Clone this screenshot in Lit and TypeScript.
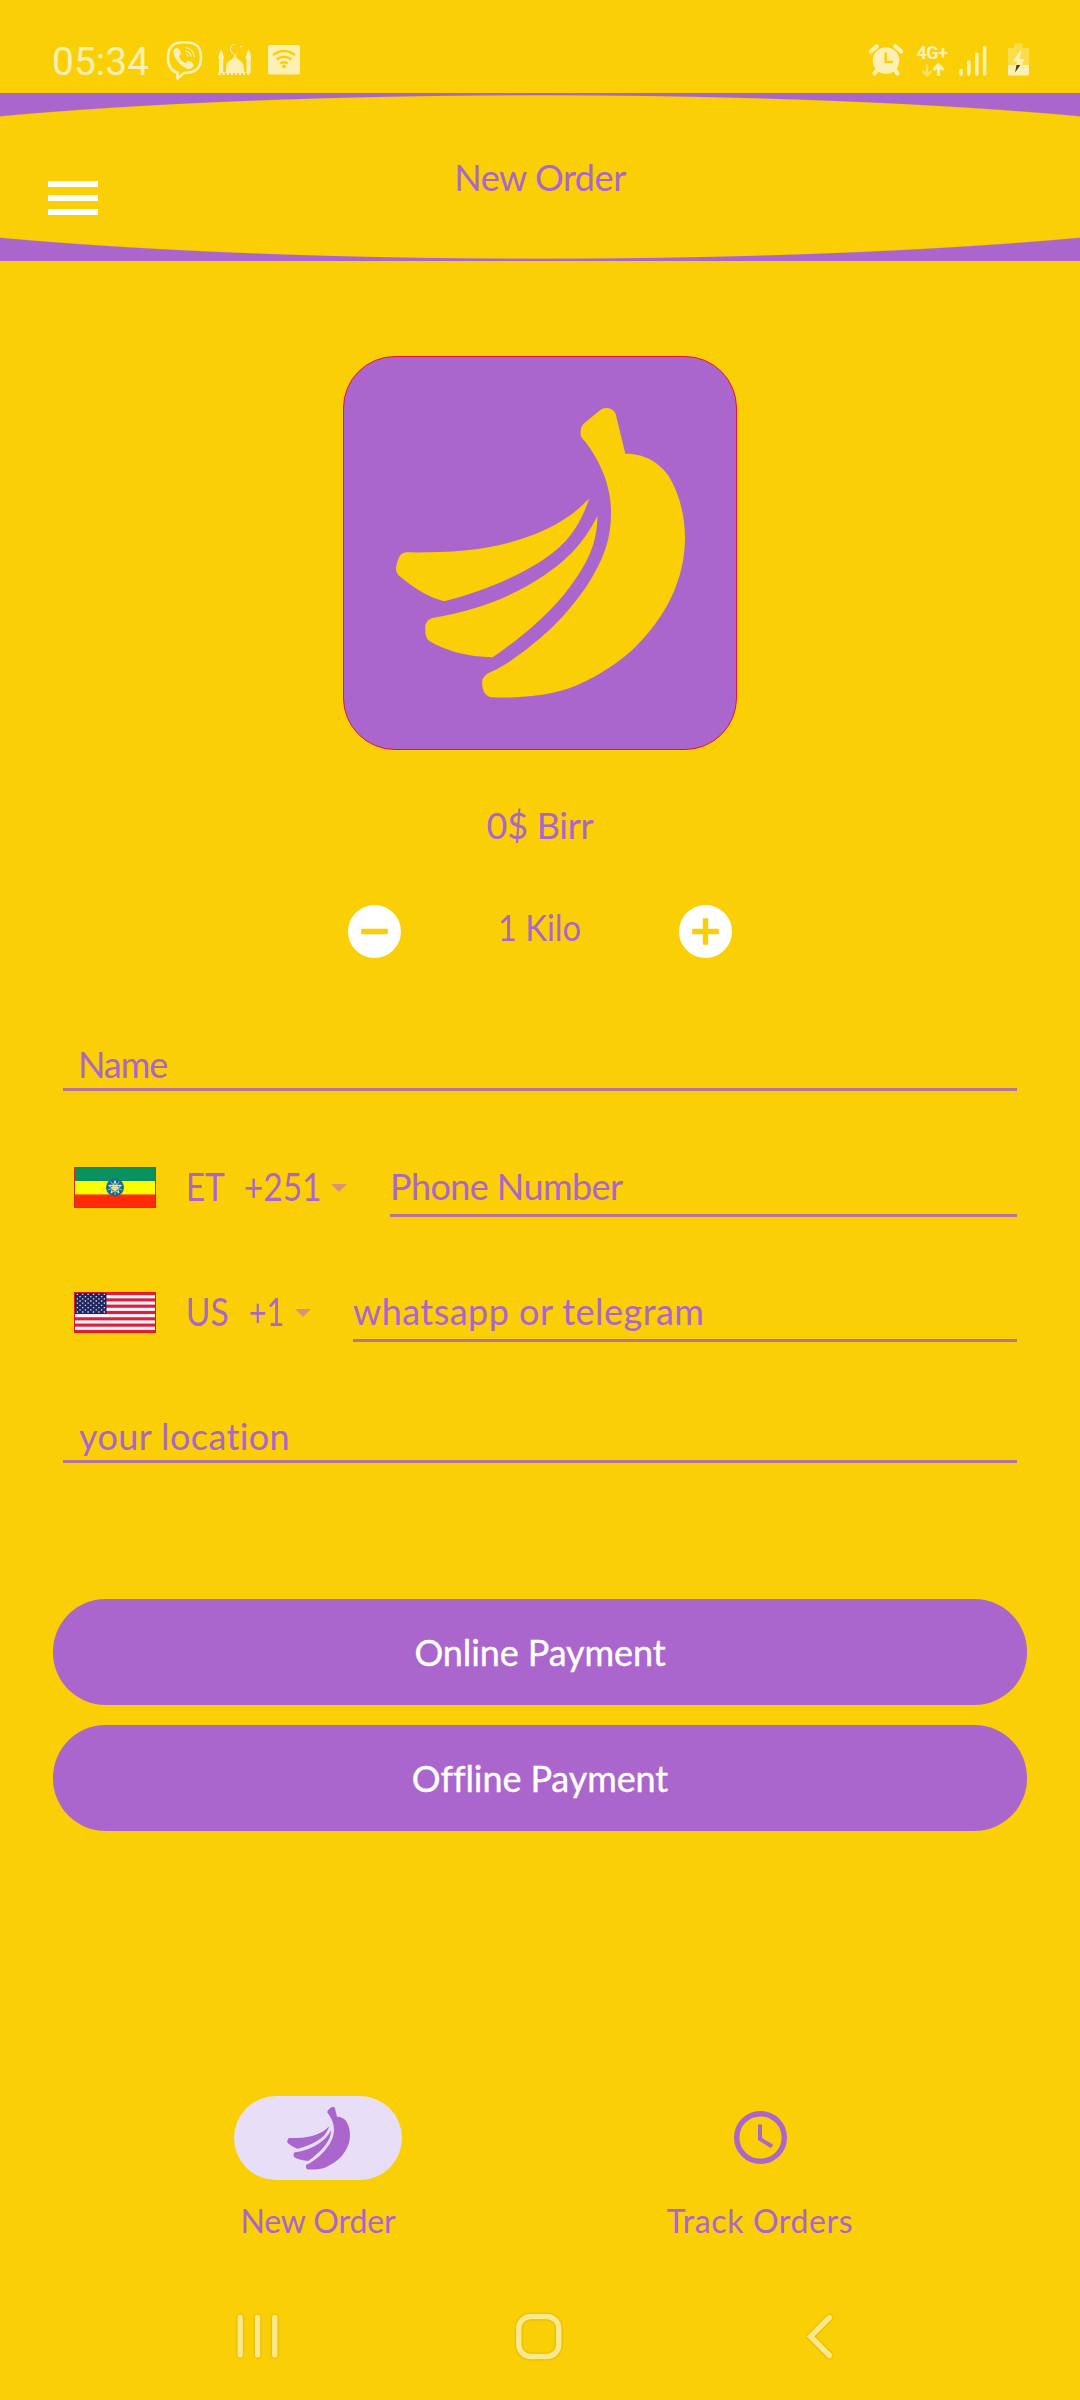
import { LitElement, html, svg, css } from "lit";
import { customElement } from "lit/decorators.js";

const bananas = svg`
  <path d="M758 238L806 198Q815 189 828 188Q849 190 856 207L885 326C920 325 975 337 1012 389C1045 438 1064 510 1064 578C1064 700 1010 815 905 916C850 966 780 1005 725 1027C660 1052 570 1060 482 1057Q463 1053 457 1030Q454 1013 457 1001Q462 990 475 984Q500 974 530 955C640 880 710 812 775 714C835 618 842 560 842 495C840 410 805 350 780 311Q768 293 753 277Q746 254 758 238Z"/>
  <path d="M777 460C710 533 620 570 540 592C440 619 340 623 228 622Q212 623 206 637Q199 652 197 668Q196 682 208 694C250 729 295 758 342 769C440 745 540 705 625 653C710 600 748 545 777 460Z"/>
  <path d="M801 513C760 595 710 645 640 692C540 758 440 796 306 819Q290 823 285 840Q284 855 286 869Q289 882 297 888C350 919 410 935 487 937C560 887 640 822 700 750C765 668 802 600 801 513Z"/>`;

const petals = [0, 1, 2, 3, 4];
const emblem = svg`
  <circle cx="41" cy="20.5" r="9" fill="#1766a8"/>
  ${petals.map((i) => svg`<g transform="rotate(${i * 72} 41 20.5)">
    <path d="M41 13.6L38.6 21.3M41 13.6L43.4 21.3M41 18V22" stroke="#e9e77a" stroke-width="1" fill="none"/>
    <path d="M41 24V28" stroke="#cfdc8a" stroke-width=".7"/></g>`)}`;

const stripes = [0, 2, 4, 6, 8, 10, 12];
const starRows = [0, 1, 2, 3, 4, 5, 6, 7, 8];

@customElement("app-root")
export class AppRoot extends LitElement {
  static styles = css`
    :host {
      display: flex;
      flex-direction: column;
      box-sizing: border-box;
      width: 1080px;
      height: 2400px;
      overflow: hidden;
      background: #facf05;
      color: #aa66cc;
      font: 36px/42px Lato, "Liberation Sans", sans-serif;
    }
    svg { display: block; flex: none; }
    .status {
      display: flex;
      height: 93px;
      box-sizing: border-box;
      padding: 38px 50px 0 52px;
      color: #fdf0b4;
      font-family: Roboto, sans-serif;
      font-size: 39px;
      line-height: 48px;
    }
    .status .time { width: 113px; }
    .status .left { margin-right: auto; }
    .header {
      display: flex;
      height: 168px;
      background: radial-gradient(ellipse 810px 82px at 540px 84px, #facf05 99%, #aa66cc 100.2%);
    }
    .menu {
      display: flex;
      flex-direction: column;
      gap: 8.5px;
      width: 50px;
      margin: 88px 0 0 48px;
    }
    .menu i { height: 5.5px; background: #fff; }
    .title {
      width: 884px;
      text-align: center;
      margin-top: 63px;
      letter-spacing: -0.45px;
    }
    .card {
      align-self: center;
      width: 394px;
      height: 394px;
      box-sizing: border-box;
      margin-top: 95px;
      border: 1px solid #ea1238;
      border-radius: 52px;
      background: #aa66cc;
      fill: #facf05;
      padding: 49px 51px;
    }
    .price { margin-top: 54px; text-align: center; letter-spacing: -0.27px; }
    .qty {
      display: flex;
      justify-content: space-between;
      align-self: center;
      width: 384px;
      margin-top: 59px;
    }
    .qty span { transform: scaleX(0.91); margin-top: 1px; }
    .field, .input {
      box-sizing: border-box;
      border-bottom: 3px solid #b5759b;
    }
    .field { height: 48px; margin: 0 63px; }
    .name { margin-top: 85px; padding-left: 15px; letter-spacing: -1.1px; }
    .location { margin-top: 73px; padding-left: 16px; letter-spacing: 0.4px; }
    .row { display: flex; height: 52px; padding: 0 63px 0 74px; }
    .et { margin-top: 74px; }
    .us { margin-top: 73px; }
    .row svg.flag { margin-top: 2px; }
    .code {
      font-size: 39px;
      line-height: 43px;
      transform-origin: left;
      transform: scaleX(0.86);
      white-space: nowrap;
    }
    .et .iso { width: 58px; margin-left: 30px; }
    .et .dial { width: 87px; }
    .us .iso { width: 63px; margin-left: 30px; }
    .us .dial { width: 46px; transform: scaleX(0.78); }
    .row svg.caret { margin-top: 19px; }
    .input { flex: 1; white-space: nowrap; }
    .et .input { margin-left: 43px; letter-spacing: -0.58px; }
    .us .input { margin-left: 42px; letter-spacing: 0.45px; }
    .buttons {
      display: flex;
      flex-direction: column;
      gap: 20px;
      margin: 136px 53px 0;
    }
    .button {
      height: 106px;
      box-sizing: border-box;
      padding-top: 32px;
      border-radius: 52.5px;
      background: #aa66cc;
      color: #fff;
      text-align: center;
      letter-spacing: -0.1px;
      -webkit-text-stroke: 0.4px #fff;
    }
    .nav {
      display: grid;
      grid-template-columns: 1fr 1fr;
      margin: 265px 99px 0 97px;
      font-size: 32px;
    }
    .tab { display: flex; flex-direction: column; align-items: center; gap: 20px; }
    .pill {
      display: flex;
      align-items: center;
      justify-content: center;
      width: 168px;
      height: 84px;
      box-sizing: border-box;
      padding-bottom: 1px;
      border-radius: 42px;
      fill: #aa66cc;
    }
    .active { background: #e8def8; }
    .first { letter-spacing: -0.1px; }
    .second { letter-spacing: 0.63px; }
    .system { display: flex; margin: 70px 0 0 233px; }
    .recents { margin-right: 231px; }
    .home { margin-right: 238px; }
    .glow { filter: drop-shadow(0 0 1px rgba(150, 120, 0, 0.55)); }
  `;

  private renderStatus() {
    return html`<div class="status">
      <span class="time">05:34</span>
      <svg class="left" width="140" height="44" viewBox="165 38 140 44" fill="currentColor">
        <path d="M178.500 73.500C170.500 71.500 168 66 168 58.500C168 47.500 172.500 42.700 184.500 42.700C196.500 42.700 201 47.500 201 58C201 68.500 196 73.500 184 73.500L177.500 79V73.300" transform="translate(0 -.5)" fill="none" stroke="currentColor" stroke-width="2.6" stroke-linejoin="round"/>
        <path d="M176.500 49C179.500 48 182 52.500 181.500 54.500C181 56 179.500 56 180 57.500C181 60.500 183 62.500 185.500 63.500C187 64 187.500 61.500 189 61.500C191 61.500 195 64.500 194.500 66C193.500 69 190.500 70.500 188 69.500C181 66.500 177.500 62.500 174.700 55.500C173.500 52.500 174 50 176.500 49Z" transform="translate(-.7 -.8)"/>
        <path d="M185 47.500Q193.500 48.500 194.500 57M185.200 51Q190.500 51.500 191.200 56.500M185.500 54.200Q187.700 54.200 188.200 56.500" fill="none" stroke="currentColor" stroke-width="1.2"/>
        <path d="M238 45A5 5 0 1 0 239.600 51A4.600 4.600 0 1 1 238 45ZM240 46.500l1-1.500 1 1.500-1 1.500zM234 53.500h2L235.800 56Q237 59 240.500 61Q245 64.500 243 68.500H226.500Q225 64.500 229 61Q233.500 59 234.200 56ZM221 49L223.200 54V70H219V54ZM248.500 49L250.700 54V70H246.500V54ZM218.500 56h5.200v3h-5.200zM245.800 56h5.200v3h-5.200zM226 68H244V73H226ZM219 70H223.200V73H219ZM246.500 70H250.700V73H246.500Z"/>
        <path d="M218.500 73.500H251" stroke="currentColor" stroke-width="3" stroke-dasharray="2.200 1.900"/>
        <rect x="268" y="45" width="32" height="29.500" rx="2"/>
        <path d="M273 55Q284 47 295 55M276.800 59.500Q284 54 291.200 59.500M280.300 63.500Q284 61 287.700 63.500" fill="none" stroke="#facf05" stroke-width="2.300"/>
        <circle cx="284" cy="66.300" r="1.900" fill="#facf05"/>
      </svg>
      <svg width="165" height="44" viewBox="865 38 165 44" fill="currentColor">
        <circle cx="886" cy="60.500" r="13.300"/>
        <path d="M870.800 51.500L876.700 46.300M901.200 51.500L895.300 46.300M877 70L874.500 73.500M895 70L897.500 73.500" stroke="currentColor" stroke-width="4.200" stroke-linecap="round"/>
        <path d="M885.800 52.500V62H893" fill="none" stroke="#facf05" stroke-width="2.600"/>
        <text x="916.500" y="59" font-family="Roboto, sans-serif" font-size="18" font-weight="700" textLength="31.500">4G+</text>
        <path d="M927 64V75M922.500 71L927 75.500L931.500 71" fill="none" stroke="currentColor" stroke-width="2.600" opacity=".5"/>
        <path d="M938.500 76V66M933.500 70L938.500 65L943.500 70" fill="none" stroke="currentColor" stroke-width="3.200"/>
        <path d="M961 70.500V74M968.800 62V74M976.800 54.500V74M984.600 47.500V74" stroke="currentColor" stroke-width="3.600" stroke-linecap="round"/>
        <path d="M1014 43.500h8.500V48h6.500V65H1008V48h6Z" opacity=".4"/>
        <path d="M1008 65h21v9q0 1.500-1.500 1.500h-18q-1.500 0-1.500-1.500Z"/>
        <path d="M1019.500 51.500H1021.500L1019.500 59H1024.500L1021 66H1016L1017 61.500H1012.500Z"/>
        <path d="M1016.500 65h3.800l-5.200 7.500Z" fill="#4c3f08"/>
      </svg>
    </div>`;
  }

  private renderEthiopia() {
    return html`<svg class="flag" width="82" height="41" viewBox="0 0 82 41">
      <path d="M0 0H82V14H0Z" fill="#0a9160"/>
      <path d="M0 14H82V27.500H0Z" fill="#fcff00"/>
      <path d="M0 27.500H82V41H0Z" fill="#ff2a06"/>
      ${emblem}
      <rect x=".5" y=".5" width="81" height="40" fill="none" stroke="#d62a10"/>
    </svg>`;
  }

  private renderUnitedStates() {
    return html`<svg class="flag" width="82" height="41" viewBox="0 0 82 41">
      <path d="M0 0H82V41H0Z" fill="#fff4f8"/>
      ${stripes.map((n) => svg`<rect y=${(n * 41) / 13} width="82" height="3.15" fill="#d8213f"/>`)}
      <rect width="32.500" height="22" fill="#20265f"/>
      ${starRows.map((r) => svg`<path d="M${r % 2 ? 5.400 : 2.700} ${2.4 + r * 2.200}H31" stroke="#dfe4f5" stroke-width="1.300" stroke-dasharray="1.300 4.100"/>`)}
      <rect x=".5" y=".5" width="81" height="40" fill="none" stroke="#e0141e"/>
    </svg>`;
  }

  private renderCaret() {
    return html`<svg class="caret" width="16" height="8" viewBox="0 0 16 8"><path d="M0 0H16L8 8Z" fill="#d7947b"/></svg>`;
  }

  render() {
    return html`
      ${this.renderStatus()}
      <div class="header">
        <div class="menu"><i></i><i></i><i></i></div>
        <div class="title">New Order</div>
      </div>
      <div class="card">
        <svg width="290" height="292" viewBox="194 183 870 876">${bananas}</svg>
      </div>
      <div class="price">0$ Birr</div>
      <div class="qty">
        <svg width="53" height="53" viewBox="0 0 53 53"><circle cx="26.500" cy="26.500" r="26.500" fill="#fff"/><rect x="13.200" y="23.800" width="26.600" height="5.500" rx="1" fill="#facf05"/></svg>
        <span>1 Kilo</span>
        <svg width="53" height="53" viewBox="0 0 53 53"><circle cx="26.500" cy="26.500" r="26.500" fill="#fff"/><path d="M13.200 26.500H39.800M26.500 13.200V39.800" stroke="#facf05" stroke-width="5.400"/></svg>
      </div>
      <div class="field name">Name</div>
      <div class="row et">
        ${this.renderEthiopia()}
        <span class="code iso">ET</span><span class="code dial">+251</span>
        ${this.renderCaret()}
        <div class="input">Phone Number</div>
      </div>
      <div class="row us">
        ${this.renderUnitedStates()}
        <span class="code iso">US</span><span class="code dial">+1</span>
        ${this.renderCaret()}
        <div class="input">whatsapp or telegram</div>
      </div>
      <div class="field location">your location</div>
      <div class="buttons">
        <div class="button">Online Payment</div>
        <div class="button">Offline Payment</div>
      </div>
      <div class="nav">
        <div class="tab">
          <div class="pill active"><svg width="63" height="64" viewBox="194 183 870 876">${bananas}</svg></div>
          <span class="first">New Order</span>
        </div>
        <div class="tab">
          <div class="pill"><svg width="53" height="53" viewBox="0 0 53 53" fill="none" stroke="#aa66cc"><circle cx="26.500" cy="26.500" r="23.800" stroke-width="5.400"/><path d="M26 13.500V28L38 35.500" stroke-width="4"/></svg></div>
          <span class="second">Track Orders</span>
        </div>
      </div>
      <div class="system">
        <svg class="recents glow" width="50" height="50" viewBox="233 2312 50 50" fill="none" stroke="#fde98c" stroke-width="5.400" stroke-linecap="round"><path d="M240.200 2317.500V2355M257.600 2317.500V2355M274.800 2317.500V2355"/></svg>
        <svg class="home glow" width="50" height="50" viewBox="514 2312 50 50" fill="none" stroke="#fde98c" stroke-width="5.600"><rect x="518.800" y="2316.500" width="40" height="40" rx="12"/></svg>
        <svg class="glow" width="34" height="50" viewBox="802 2312 34 50" fill="none" stroke="#fde98c" stroke-width="5.400" stroke-linecap="round"><path d="M829.500 2317.500L810.500 2336.500L829.500 2355.500"/></svg>
      </div>
    `;
  }
}
